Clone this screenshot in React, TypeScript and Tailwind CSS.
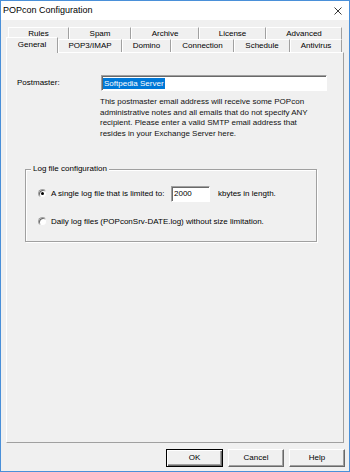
import React from "react";

const F = { fontFamily: '"Liberation Sans", Arial, sans-serif' };

function Tab({ label, w }: { label: string; w: number }) {
  return (
    <div
      className="h-full flex items-center justify-center border-t border-l border-t-white border-l-white border-r border-r-[#a0a0a0] rounded-tl-[1px]"
      style={{ width: w }}
    >
      <span>{label}</span>
    </div>
  );
}

function Radio({ checked }: { checked?: boolean }) {
  return (
    <div className="w-[9px] h-[9px] rounded-full bg-white border border-t-[#a0a0a0] border-l-[#a0a0a0] border-r-[#f0f0f0] border-b-[#f0f0f0] shadow-[inset_1px_1px_0_#696969] flex items-center justify-center">
      {checked && <div className="w-[3px] h-[3px] rounded-full bg-black" />}
    </div>
  );
}

function Btn({ label, def }: { label: string; def?: boolean }) {
  return (
    <div
      className={
        "h-[18px] flex items-center justify-center bg-[#f0f0f0] " +
        (def
          ? "border border-black shadow-[inset_1px_1px_0_#ffffff,inset_-1px_-1px_0_#696969,inset_-2px_-2px_0_#a0a0a0]"
          : "border border-t-white border-l-white border-r-[#696969] border-b-[#696969] shadow-[inset_-1px_-1px_0_#a0a0a0]")
      }
      style={{ width: label === "OK" ? 57 : 56 }}
    >
      {label}
    </div>
  );
}

export default function App() {
  return (
    <div
      className="w-[350px] h-[472px] border border-[#4a90d9] bg-[#f0f0f0] text-black text-[8px] flex flex-col relative overflow-hidden"
      style={F}
    >
      {/* title bar */}
      <div className="h-[19px] bg-white flex items-center justify-between pl-[2px] pr-[7px]">
        <span className="text-[9px] leading-none">POPcon Configuration</span>
        <svg width="8" height="8" viewBox="0 0 8 8" className="mt-[1px]">
          <path d="M0.5 0.5 L7.5 7.5 M7.5 0.5 L0.5 7.5" stroke="#222" strokeWidth="0.9" />
        </svg>
      </div>

      {/* tabs */}
      <div className="mt-[7px] pl-[7px] h-[12px] flex">
        <Tab label="Rules" w={61} />
        <Tab label="Spam" w={62} />
        <Tab label="Archive" w={68} />
        <Tab label="License" w={67} />
        <Tab label="Advanced" w={76} />
      </div>
      <div className="h-[13px] flex pl-[7px] relative z-10">
        <div className="relative -ml-[2px] -mt-[2px] h-[16px] w-[52px] flex items-center justify-center bg-[#f0f0f0] border-t border-l border-t-white border-l-white border-r border-r-[#a0a0a0] pb-[2px]">
          General
        </div>
        <Tab label="POP3/IMAP" w={64} />
        <Tab label="Domino" w={49} />
        <Tab label="Connection" w={63} />
        <Tab label="Schedule" w={56} />
        <Tab label="Antivirus" w={52} />
      </div>

      {/* panel */}
      <div className="ml-[5px] mr-[5px] h-[391px] border border-t-white border-l-white border-r-[#a0a0a0] border-b-[#a0a0a0] relative">
        <div className="flex items-center mt-[22px] pl-[10px]">
          <span className="w-[84px]">Postmaster:</span>
          <div className="w-[226px] h-[16px] bg-white border border-t-[#a0a0a0] border-l-[#a0a0a0] border-r-white border-b-white shadow-[inset_1px_1px_0_#696969] flex items-center pl-[1px]">
            <span className="bg-[#0078d7] text-white px-[1px] leading-[11px]">Softpedia Server</span>
          </div>
        </div>
        <div className="ml-[93px] mt-[6px] leading-[10.7px] text-[#111]">
          This postmaster email address will receive some POPcon
          <br />
          administrative notes and all emails that do not specify ANY
          <br />
          recipient. Please enter a valid SMTP email address that
          <br />
          resides in your Exchange Server here.
        </div>

        {/* group box */}
        <div className="ml-[18px] mt-[29px] w-[292px] h-[73px] border border-[#a0a0a0] shadow-[1px_1px_0_#ffffff,inset_1px_1px_0_#ffffff] relative">
          <span className="absolute -top-[6px] left-[5px] px-[2px] bg-[#f0f0f0] leading-[10px]">
            Log file configuration
          </span>
          <div className="flex items-center mt-[16px] ml-[12px] h-[16px]">
            <Radio checked />
            <span className="ml-[4px] w-[120px]">A single log file that is limited to:</span>
            <div className="w-[39px] h-[16px] bg-white border border-t-[#a0a0a0] border-l-[#a0a0a0] border-r-white border-b-white shadow-[inset_1px_1px_0_#696969] flex items-center pl-[2px]">
              2000
            </div>
            <span className="ml-[8px]">kbytes in length.</span>
          </div>
          <div className="flex items-center mt-[14px] ml-[12px]">
            <Radio />
            <span className="ml-[4px]">Daily log files (POPconSrv-DATE.log) without size limitation.</span>
          </div>
        </div>
      </div>

      {/* buttons */}
      <div className="flex justify-end gap-[5px] mt-[6px] pr-[4px]">
        <Btn label="OK" def />
        <Btn label="Cancel" />
        <Btn label="Help" />
      </div>
    </div>
  );
}
